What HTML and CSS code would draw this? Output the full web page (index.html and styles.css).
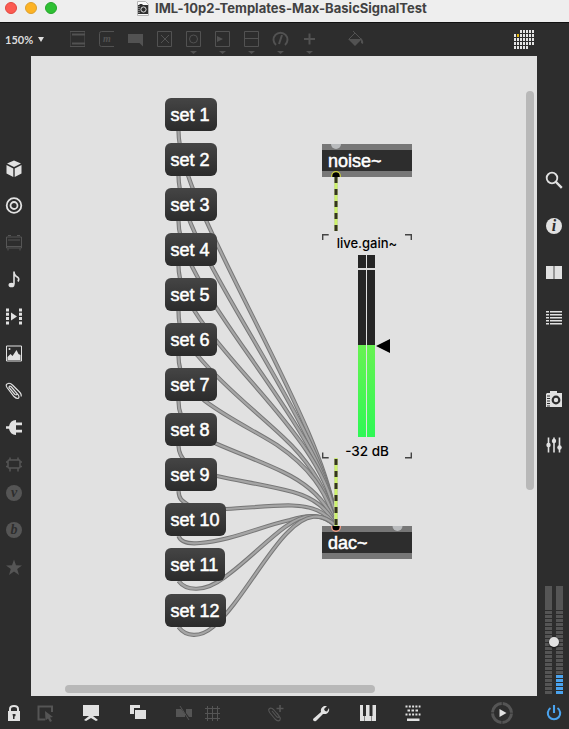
FILE: index.html
```html
<!DOCTYPE html>
<html lang="en">
<head>
<meta charset="utf-8">
<title>IML-10p2-Templates-Max-BasicSignalTest</title>
<link rel="stylesheet" href="styles.css">
</head>
<body>
<div class="window">
  <header class="titlebar">
    <div class="lights"><i class="close"></i><i class="minimize"></i><i class="expand"></i></div>
    <svg class="doc" width="12" height="15" viewBox="0 0 12 15"><path d="M.5.5h8l3 3v11H.5z" fill="#fafafa" stroke="#b5b5b5"/><path d="M1 4h1.500v-1h3v1H11v9H1z" fill="#303030"/><circle cx="6.500" cy="8.500" r="2.600" fill="none" stroke="#ddd"/><path d="M2 5v7" stroke="#bbb" stroke-dasharray="1 1"/></svg>
    <h1>IML-10p2-Templates-Max-BasicSignalTest</h1>
  </header>
  <nav class="toolbar">
    <span class="zoom">150%</span><span class="caret"></span>
    <div class="tools">
      <svg viewBox="0 0 29 33"><path d="M7 8.500h15M7 23.500h15" /><path d="M9 11.500h13M9 20.500h13" stroke-width="2"/><path d="M7.500 8v16M21.500 8v16" opacity=".5"/></svg>
      <svg viewBox="0 0 29 33"><path d="M22 8.500H9.500q-2 0-2 2v11q0 2 2 2H22"/><text x="11" y="19" class="m">m</text></svg>
      <svg viewBox="0 0 29 33"><path class="f" d="M7 11h15v12.500L18.500 20H7z"/></svg>
      <svg viewBox="0 0 29 33"><path d="M7.500 8.500h14v15h-14zM11 12l8 8M19 12l-8 8"/></svg>
      <svg viewBox="0 0 29 33"><path d="M7.500 8.500h14v15h-14z"/><circle cx="14.500" cy="16" r="4"/><path class="f" d="M11 28h7l-3.500 3z"/></svg>
      <svg viewBox="0 0 29 33"><path d="M7.500 8.500h14v15h-14z"/><path class="f" d="M9 13l6 3-6 3zM11 28h7l-3.500 3z"/></svg>
      <svg viewBox="0 0 29 33"><path d="M7.500 8.500h14v15h-14zM7 15.500h15"/><path class="f" d="M11 28h7l-3.500 3z"/></svg>
      <svg viewBox="0 0 29 33"><path stroke-width="2" d="M10 22a7 7 0 1 1 9 0M13 21l3-9"/><path class="f" d="M11 28h7l-3.500 3z"/></svg>
      <svg viewBox="0 0 29 33"><path stroke-width="2" d="M9 16h11M14.500 10.500v11"/><path class="f" d="M11 28h7l-3.500 3z"/></svg>
    </div>
    <svg class="bucket" viewBox="0 0 29 33"><path d="M8 16l6-6 6 6M14 10l-2-2"/><path class="f" d="M7 16h14l-7 7zM20 15q3 3 2 6l-2-1z"/></svg>
    <svg class="patcher" width="22" height="20"><g stroke="#e4e4e4" stroke-width="3" stroke-dasharray="2 1"><path d="M7 1.500h14M1 5.500h20M1 9.500h20M1 13.500h20M1 17.500h14"/></g><path d="M4 4h2v3H4z" fill="#e5b80b"/></svg>
  </nav>
  <main>
    <aside class="left">
      <svg viewBox="0 0 20 20"><path class="w" d="M10 2l7 3-7 3.500L3 5zM2.500 6.500L9.300 10v8.500L2.500 15zM17.500 6.500L10.700 10v8.500l6.800-3.500z"/></svg>
      <svg viewBox="0 0 20 20" class="line"><circle cx="10" cy="10" r="7.300"/><circle cx="10" cy="10" r="3.500"/></svg>
      <svg viewBox="0 0 20 20" class="dim line"><path stroke-width="1" d="M2.500 4.500h15v11h-15zM4 7.500h12M3 14h14M4 16v2M16 16v2M4 3h3M13 3h3"/></svg>
      <svg viewBox="0 0 20 20"><ellipse class="w" cx="7.500" cy="15.500" rx="3" ry="2.300"/><path d="M10 15V2q0 4 4 6 1.500 1.500 0 4" class="note"/></svg>
      <svg viewBox="0 0 20 20"><path class="w" d="M2 2h3v3H2zM2 6.300h3v3H2zM2 10.600h3v3H2zM2 15h3v3H2zM15 2h3v3h-3zM15 6.300h3v3h-3zM15 10.600h3v3h-3zM15 15h3v3h-3zM7 6l6 4-6 4z"/></svg>
      <svg viewBox="0 0 20 20"><path class="line" stroke-width="1" d="M2.500 2.500h15v15h-15z"/><path class="w" d="M3.500 16.500v-3l3-3 2 2 4-6 2 4 2 1v5z"/><circle class="w" cx="5.500" cy="5.500" r="1"/></svg>
      <svg viewBox="0 0 20 20"><path class="line" stroke-width="1.200" d="M7 6l7 8q2 3 0 4-2 0-4-2L3 7Q1 4 4 3q2-1 5 2l6 6q3 3 2 5M7 6q-2-1-2 1l6 7q2 1 2-1"/></svg>
      <svg viewBox="0 0 20 20"><path class="w" d="M2 8.700h3Q6 3 12 2.500V5h6v2.700h-6v4.600h6V15h-6v2.500Q6 17 5 11.300H2z"/></svg>
      <svg viewBox="0 0 20 20" class="dim line"><path stroke-width="1.500" d="M5 5.500h10q1 0 1 1v6q0 1-1 1H5q-1 0-1-1v-6q0-1 1-1zM6 3v3M14 3v3M6 13v4M14 13v4M2 7.500h2M2 12h2M16 7.500h2M16 12h2"/></svg>
      <b class="disc v">v</b>
      <b class="disc b">b</b>
      <svg viewBox="0 0 20 20" class="star"><path fill="#555" d="M10 2l2 5.800 6 .1-4.800 3.600 1.800 6-5-3.500-5 3.500 1.800-6L2 7.900l6-.1z"/></svg>
    </aside>
    <section class="canvas">
      <svg class="cables" width="506" height="640" viewBox="31 56 506 640">
        <defs>
          <g id="wires">
            <path d="M178.500 131C178.500 209 331 430 336 526"/>
            <path d="M178.500 176C178.500 251 331 430 336 526"/>
            <path d="M178.500 221C178.500 293 331 430 336 526"/>
            <path d="M178.500 266C178.500 336 331 430 336 526"/>
            <path d="M178.500 311C178.500 335 187 343 198 356C225 388 258 413 283 437C310 462 328 490 336 526"/>
            <path d="M178.500 356C178.500 376 189 388 205 401C229 419 255 431 277 445C308 466 327 490 336 526"/>
            <path d="M178.500 401C178.500 422 192 434 217 444C240 454 260 461 283 472C308 484 327 500 336 526"/>
            <path d="M178.500 446C179 459 188 468 217 476C245 482 270 486 293 492C314 498 327 508 336 526"/>
            <path d="M178.500 491C179 499 182 501 187 504C198 510 212 509.500 226 509C250 508 270 505 292 505.500C312 506 325 511 336 526"/>
            <path d="M178.500 536C181 543 190 544 200 543C230 541 262 526 290 520C310 514 322 514 336 526"/>
            <path d="M178.500 581C186 591 204 593 225 577C246 562 267 540 285 527C304 513 322 512 336 526"/>
            <path d="M178.500 627C186 637 200 638 213 627C238 606 265 555 287 533C306 513 322 512 336 526"/>
          </g>
        </defs>
        <g id="patch"></g>
      </svg>
      <div class="message n1">set 1</div><div class="message n2">set 2</div><div class="message n3">set 3</div>
      <div class="message n4">set 4</div><div class="message n5">set 5</div><div class="message n6">set 6</div>
      <div class="message n7">set 7</div><div class="message n8">set 8</div><div class="message n9">set 9</div>
      <div class="message n10">set 10</div><div class="message n11">set 11</div><div class="message n12">set 12</div>
      <div class="object noise">noise~</div>
      <div class="object dac">dac~</div>
      <div class="gain">
        <span class="name">live.gain~</span>
        <div class="meter"><i></i><i></i><svg width="14" height="14"><path d="M0 7L14 0v14z"/></svg></div>
        <span class="db">-32 dB</span>
      </div>
      <svg class="ports" width="506" height="640" viewBox="31 56 506 640">
        <path d="M322.700 240v-5.300h6M405 234.700h6.300v5.300M322.700 452.500v5.300h6M405 457.800h6.300v-5.300" fill="none" stroke="#444" stroke-width="1.400"/>
        <path d="M336 177v54M336 458v68" stroke="#c7c7c7" stroke-width="4"/>
        <path d="M336 177v54M336 458v68" stroke="#cdf36a" stroke-width="3"/>
        <path d="M336 177v54M336 459v67" stroke="#34351f" stroke-width="3" stroke-dasharray="6 6"/>
        <path d="M331 144a5 5 0 0 0 10 0z" fill="#b9bbbd"/><path d="M392.500 526a5 5 0 0 0 10 0z" fill="#b9bbbd"/>
        <path d="M332 177v-1a4 4 0 0 1 8 0v1z" fill="#000"/><path d="M331.700 177v-1a4.300 4.300 0 0 1 8.600 0v1" fill="none" stroke="#c9cd3a" stroke-width="1.200"/>
        <path d="M332 526v1a4 4 0 0 0 8 0v-1z" fill="#000"/><path d="M331.700 526v1a4.300 4.300 0 0 0 8.600 0v-1" fill="none" stroke="#f19a83" stroke-width="1.400"/>
      </svg>
      <i class="scroll-y"></i><i class="scroll-x"></i>
    </section>
    <aside class="right">
      <svg viewBox="0 0 20 20"><circle class="line" cx="8" cy="8" r="5.300"/><path class="line" stroke-width="2.400" d="M11.500 11.500l6.300 6.300"/></svg>
      <b class="disc info">i</b>
      <svg viewBox="0 0 20 20"><path class="w" d="M2 4h7.200v13H2zM10.500 4H18v13h-7.500z"/><path fill="#aaa" d="M9.200 4h1.300v13H9.200z"/></svg>
      <svg viewBox="0 0 20 20"><path class="w" d="M2 3h3v1.500H2zM6 3h12v1.500H6zM2 6h3v1.500H2zM6 6h12v1.500H6zM2 9h3v1.500H2zM6 9h12v1.500H6zM2 12h3v1.500H2zM6 12h12v1.500H6zM2 15h3v1.500H2zM6 15h12v1.500H6z"/></svg>
      <svg class="camera" viewBox="0 0 20 20"><path class="w" d="M3 4h3V2h7v2h5v14H2V5z"/><circle cx="12" cy="11" r="3.300" fill="#e1e1e1" stroke="#2d2d2d" stroke-width="2.200"/><path d="M4.500 6.500v11" stroke="#2d2d2d" stroke-width="3" stroke-dasharray="1 1.500"/></svg>
      <svg viewBox="0 0 20 20"><path class="line" stroke-width="1.600" d="M4.500 2.500v15M10 2.500v15M15.500 2.500v15"/><g class="w"><circle cx="4.500" cy="10" r="2.200"/><circle cx="10" cy="6" r="2.200"/><circle cx="15.500" cy="12.500" r="2.200"/></g></svg>
      <div class="levels"><i></i><i class="active"></i><b></b></div>
    </aside>
  </main>
  <footer class="bottom">
    <svg viewBox="0 0 24 24"><path class="w" d="M6 10h12v10H6z"/><path class="line" stroke-width="2" d="M8 11V8q0-3 4-3t4 3v3"/><path fill="#2d2d2d" d="M10.500 13h3v2l-1 .5V18h-1.500v-2.500z"/></svg>
    <svg viewBox="0 0 24 24"><path class="line dim" stroke-width="2" d="M19 11V5.500H5.500v13H12"/><path fill="#555" d="M12 10l8 6-3 .5 2 3.500-2 1-2-3.500-2.500 2z"/></svg>
    <svg viewBox="0 0 24 24"><path class="w" d="M4 4h16v11H4zM10 15h4l5 4-2 1-5-3-5 3-2-1z"/></svg>
    <svg viewBox="0 0 24 24"><path class="w" d="M4 4h10v3H8v6H4zM9 9h11v9H9z"/></svg>
    <svg viewBox="0 0 24 24"><path fill="#555" d="M4 8h5l4 5v3H4zM14 8h6v8h-3l-3-4z"/><path class="line dim" stroke-width="1" d="M8 5l9 14"/></svg>
    <svg viewBox="0 0 24 24"><path class="line dim" stroke-width="1" d="M7.500 5v15M12.500 5v15M17.500 5v15M5 7.500h15M5 12.500h15M5 17.500h15"/></svg>
    <svg viewBox="0 0 24 24"><path class="line dim" stroke-width="1.100" d="M9 10l5 6q2 1 2-1l-5-6q-3-3-5-1-1 1 1 4l5 6q3 3 5 1 1-2-1-4l-2-3"/><path class="line dim" stroke-width="1.600" d="M13.500 7.500h7M17 4v7"/></svg>
    <svg viewBox="0 0 24 24"><path class="w" d="M4 18l8-7q-1-4 3-6l3 0-3 3 1 2 2 .5L20 7q1 4-3 6l-3 0-7 7q-3 1-3-2z"/></svg>
    <svg viewBox="0 0 24 24"><path class="w" d="M4 4h3v11h1.500v5H4zM10 4h3.500v11H15v5H9v-5h1zM16.500 4H20v16h-4.500v-5h1z"/></svg>
    <svg viewBox="0 0 24 24"><path class="line" stroke-width="2" stroke-dasharray="2 1.300" d="M4.500 5.500h15M4.500 13.500h15"/><path class="line" stroke-width="2" stroke-dasharray="2.500 1.500" d="M6.500 9.500h11"/><path class="w" d="M6 17.500h12.500v2.500H6z"/></svg>
    <svg class="play" viewBox="0 0 24 24"><circle cx="12" cy="12" r="9.500" fill="none" stroke="#555" stroke-width="3" stroke-dasharray="13.900 1" stroke-dashoffset="-.5"/><path class="w" d="M9.500 8l7 4-7 4z"/></svg>
    <svg viewBox="0 0 24 24"><path fill="none" stroke="#4aa3ee" stroke-width="2.100" d="M8.500 7a6.200 6.200 0 1 0 7 0M12 4v8"/></svg>
  </footer>
</div>
<script>
// Each cord is drawn as a dark edge with a lighter core, in stacking order.
const patch = document.getElementById('patch');
document.querySelectorAll('#wires path').forEach(wire => {
  for (const layer of ['edge', 'core']) {
    const stroke = wire.cloneNode();
    stroke.setAttribute('class', layer);
    patch.append(stroke);
  }
});
</script>
</body>
</html>
```
FILE: styles.css
```css
* { box-sizing: border-box; }
body { margin: 0; background: #2d2d2d; font-family: "Liberation Sans", sans-serif; overflow: hidden; }
.window { width: 569px; height: 729px; display: grid; grid-template-rows: 23px 33px 640px 33px; background: #2d2d2d; }
.titlebar { display: flex; align-items: center; background: #eee; border-bottom: 1px solid #111; padding-left: 5px; }
.lights { display: flex; gap: 8px; width: 132px; margin-top: -6px; }
.lights i { width: 12px; height: 12px; border-radius: 50%; border: 1px solid #e2483f; background: #fc5b52; }
.lights .minimize { background: #fdb324; border-color: #dda02d; }
.lights .expand { background: #2ec033; border-color: #25a52b; }
.doc { flex: none; margin-top: -6px; }
h1 { margin: -6px 0 0 6px; font: 700 13px/16px Inter, sans-serif; letter-spacing: .02px; color: #424242; white-space: nowrap; }
.toolbar { display: flex; align-items: center; padding-left: 5px; }
.zoom { font: 700 11px/14px Lato, sans-serif; color: #ddd; width: 33px; }
.caret { border: 3px solid transparent; border-top: 5px solid #ddd; border-bottom: 0; width: 6px; margin-right: 19px; }
.tools { display: flex; }
.tools svg, .bucket { width: 29px; height: 33px; fill: none; stroke: #525252; }
.f { fill: #525252; stroke: none; }
.m { font: italic 700 10px "Liberation Serif", serif; fill: #525252; stroke: none; }
.bucket { margin-left: 17px; }
.patcher { margin-left: 143px; }
main { display: grid; grid-template-columns: 31px 506px 32px; }
aside { display: flex; flex-direction: column; align-items: center; }
aside svg { width: 20px; flex: none; }
.left { padding: 94px 3px 0 0; }
.left svg { height: 37px; }
.left, .right, .bottom { stroke-width: 1.8; }
.w { fill: #e1e1e1; stroke: none; }
.line { fill: none; stroke: #e1e1e1; }
.dim { stroke: #555; }
.note { fill: none; stroke: #e1e1e1; stroke-width: 1.6; }
.disc { flex: none; width: 16px; height: 16px; border-radius: 50%; background: #555; color: #2d2d2d; font: italic 700 14px/15px "Liberation Serif", serif; text-align: center; }
.disc.v { margin-top: 2px; }
.disc.b { margin: 21px 0 11px; }
.canvas { position: relative; background: #e1e1e1; }
.cables, .ports { position: absolute; inset: 0; }
.edge { fill: none; stroke: #777; stroke-width: 4.2; }
.core { fill: none; stroke: #a5a5a5; stroke-width: 2.2; }
.message { position: absolute; left: 134px; width: 52px; height: 33px; border-radius: 6px; padding-left: 5.5px; background: linear-gradient(#454545, #2b2b2b); color: #fff; font-size: 18px; line-height: 34px; -webkit-text-stroke: .5px #fff; white-space: nowrap; }
.n1 { top: 42px; }
.n2 { top: 87px; }
.n3 { top: 132px; }
.n4 { top: 177px; }
.n5 { top: 222px; }
.n6 { top: 267px; }
.n7 { top: 312px; }
.n8 { top: 357px; }
.n9 { top: 402px; }
.n10 { top: 447px; width: 61px; }
.n11 { top: 492px; width: 60px; }
.n12 { top: 538px; width: 61px; }
.object { position: absolute; left: 291px; width: 90px; height: 33px; padding-left: 6px; border: solid #777; border-width: 6px 0; background: #2d2d2d; color: #fff; font-size: 18px; line-height: 22px; -webkit-text-stroke: .5px #fff; }
.noise { top: 88px; }
.dac { top: 470px; }
.gain { position: absolute; left: 291px; top: 178px; width: 90px; height: 224px; display: flex; flex-direction: column; align-items: center; font: 500 13px/18px Inter, sans-serif; color: #000; }
.meter { display: flex; flex: none; gap: 1px; margin: 3px 0 5px 13px; height: 182px; }
.meter i { width: 8px; background: linear-gradient(#252525 0 13px, #ddd 13px 15px, #252525 15px 90px, #68f252 90px, #2ef855 182px); }
.meter svg { margin-top: 84px; }
.db { font-size: 13.5px; }
.scroll-y, .scroll-x { position: absolute; border-radius: 4px; background: #b8b8b8; }
.scroll-y { left: 495px; top: 35px; width: 8px; height: 399px; }
.scroll-x { left: 34px; top: 629px; width: 310px; height: 8px; }
.right { padding: 101px 0 0 2px; }
.right svg { height: 46px; }
.disc.info { background: #e1e1e1; margin: 15px 0; font-size: 16px; }
.right .camera { margin-top: 35px; }
.levels { position: relative; display: flex; gap: 4px; width: 18px; height: 108px; margin-top: 118px; }
.levels i { width: 7px; background: linear-gradient(#555 0 24px, transparent 24px), repeating-linear-gradient(#2d2d2d 0 1px, #555 1px 4px); }
.levels .active { background: linear-gradient(#555 0 24px, transparent 24px), repeating-linear-gradient(#2d2d2d 0 1px, transparent 1px 4px), linear-gradient(#555 88px, #4aa3ee 88px); }
.levels b { position: absolute; left: 4px; top: 51px; width: 10px; height: 10px; border-radius: 50%; background: #e1e1e1; box-shadow: 0 1px 2px #111; }
.bottom { display: flex; align-items: center; padding-left: 2px; }
.bottom svg { width: 24px; height: 24px; flex: none; }
.bottom svg:nth-child(2) { margin-left: 7px; }
.bottom svg:nth-child(3) { margin-left: 22px; }
.bottom svg:nth-child(4) { margin-left: 23px; }
.bottom svg:nth-child(5) { margin-left: 22px; }
.bottom svg:nth-child(6) { margin-left: 4px; }
.bottom svg:nth-child(7) { margin-left: 39px; }
.bottom svg:nth-child(8) { margin-left: 22px; }
.bottom svg:nth-child(9) { margin-left: 23px; }
.bottom svg:nth-child(10) { margin-left: 21px; }
.bottom svg.play { margin-left: 65px; }
.bottom svg:last-child { margin-left: 28px; }
```
